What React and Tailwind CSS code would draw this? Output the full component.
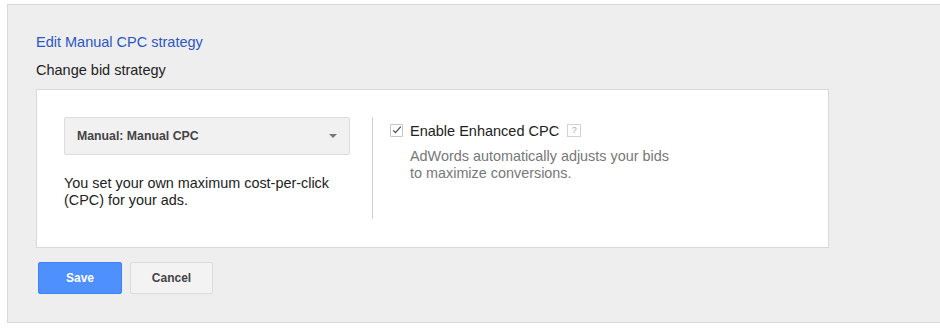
import React from 'react';

const font = { fontFamily: '"Liberation Sans", Arial, sans-serif' };

const Checkbox = () => (
    <span className="w-[13px] h-[13px] border border-[#c6c6c6] bg-white rounded-[1px] flex items-center justify-center shrink-0">
        <svg width="13" height="12" viewBox="0 0 13 12" className="-mt-[2px] ml-[1px]">
            <path d="M1.5 6.5 L4.5 9.5 L11.5 1.5" fill="none" stroke="#4a4a4a" strokeWidth="1.6" />
        </svg>
    </span>
);

const App = () => {
    return (
        <div className="w-[940px] h-[329px] bg-white pt-[4px] pl-[7px] overflow-hidden" style={font}>
            <div className="h-[319px] bg-[#eeeeee] border border-r-0 border-[#d9d9d9] pl-[28px] pt-[29px]">
                <div className="text-[14.5px] leading-[16px] text-[#2a56c6]">Edit Manual CPC strategy</div>
                <div className="mt-[12px] text-[14.5px] leading-[16px] text-[#222]">Change bid strategy</div>

                {/* Strategy box */}
                <div className="mt-[11px] w-[793px] h-[159px] bg-white border border-[#d9d9d9] flex items-start pt-[27px] pl-[27px]">
                    <div className="w-[286px]">
                        <div className="h-[38px] bg-[#f1f1f1] border border-[#dcdcdc] rounded-[2px] flex items-center justify-between pl-[12px] pr-[12px]">
                            <span className="text-[12.3px] font-bold text-[#444]">Manual: Manual CPC</span>
                            <span className="w-0 h-0 border-l-[4px] border-r-[4px] border-t-[4px] border-l-transparent border-r-transparent border-t-[#777]"></span>
                        </div>
                        <p className="mt-[20px] text-[14.4px] leading-[17px] text-[#222]">
                            You set your own maximum cost-per-click<br />(CPC) for your ads.
                        </p>
                    </div>

                    <div className="ml-[22px] w-px h-[102px] bg-[#d0d0d0]"></div>

                    <div className="pl-[17px] pt-[7px]">
                        <div className="flex items-center h-[13px]">
                            <Checkbox />
                            <span className="ml-[7px] text-[14.5px] leading-[16px] text-[#222]">Enable Enhanced CPC</span>
                            <span className="ml-[8px] w-[14px] h-[13px] border border-[#d3d3d3] bg-white flex items-center justify-center text-[9px] leading-none text-[#aaa]">?</span>
                        </div>
                        <p className="mt-[11px] ml-[20px] text-[14.4px] leading-[17px] text-[#777]">
                            AdWords automatically adjusts your bids<br />to maximize conversions.
                        </p>
                    </div>
                </div>

                <div className="mt-[14px] ml-[2px] flex gap-[8px]">
                    <button className="w-[84px] h-[32px] bg-[#4d90fe] border border-[#3f84f3] rounded-[2px] text-white text-[12px] font-bold">
                        Save
                    </button>
                    <button className="w-[83px] h-[32px] bg-[#f3f3f3] border border-[#dcdcdc] rounded-[2px] text-[#444] text-[12px] font-bold">
                        Cancel
                    </button>
                </div>
            </div>
        </div>
    );
};

export default App;
